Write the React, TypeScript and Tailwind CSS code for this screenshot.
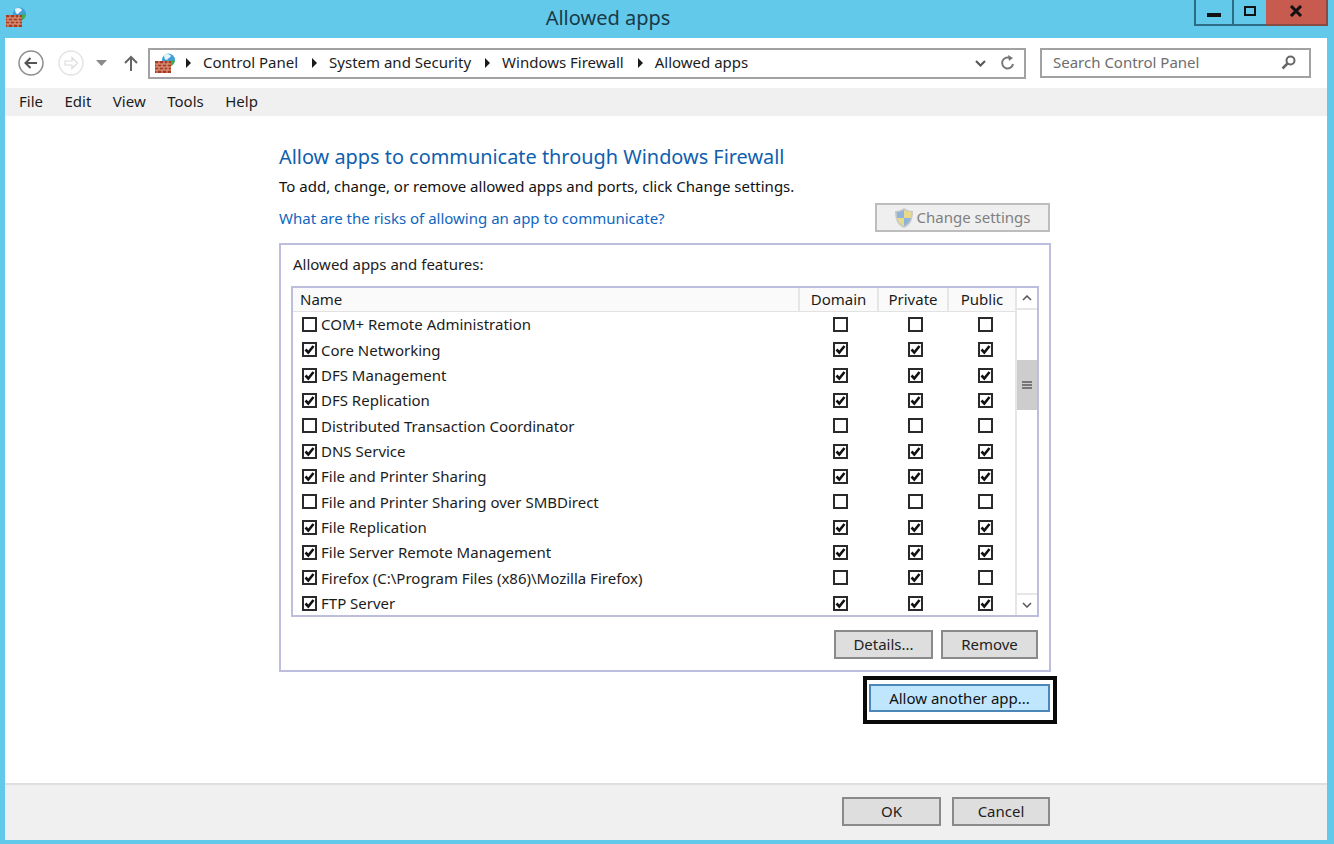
const rows: [string, boolean, boolean, boolean, boolean][] = [
  ['COM+ Remote Administration', false, false, false, false],
  ['Core Networking', true, true, true, true],
  ['DFS Management', true, true, true, true],
  ['DFS Replication', true, true, true, true],
  ['Distributed Transaction Coordinator', false, false, false, false],
  ['DNS Service', true, true, true, true],
  ['File and Printer Sharing', true, true, true, true],
  ['File and Printer Sharing over SMBDirect', false, false, false, false],
  ['File Replication', true, true, true, true],
  ['File Server Remote Management', true, true, true, true],
  ['Firefox (C:\\Program Files (x86)\\Mozilla Firefox)', true, false, true, false],
  ['FTP Server', true, true, true, true],
]

const FirewallIcon = () => (
  <svg width="22" height="22" viewBox="0 0 22 22" className="shrink-0">
    <circle cx="14.5" cy="8" r="6.5" fill="#3f9fd8" />
    <path d="M10 3c3-2 6-1 7 1-1 2-3 2-4 4-2 0-3-2-3-5z" fill="#e8f4fb" />
    <path d="M15 9c2-1 4-1 6 0-1 3-3 5-5 5-1-2-2-3-1-5z" fill="#3fae4a" />
    <rect x="1" y="9" width="16" height="12" fill="#a83a22" />
    <path d="M1 12h16M1 15h16M1 18h16M5 9v3M10 9v3M14 9v3M3 12v3M8 12v3M13 12v3M5 15v3M10 15v3M14 15v3M3 18v3M8 18v3M13 18v3" stroke="#e2a48c" strokeWidth="1" fill="none" />
  </svg>
)

const ShieldIcon = () => (
  <svg width="20" height="22" viewBox="0 0 20 22" className="shrink-0">
    <path d="M10 1c3 2 5 3 9 3 0 8-2 14-9 17C3 18 1 12 1 4c4 0 6-1 9-3z" fill="#c9c9c9" />
    <path d="M10 3v8H3c0-2-.2-4-.2-6C5.500 5 8 4.200 10 3z" fill="#8fb4dc" />
    <path d="M10 3c2 1.200 4.500 2 7.200 2 0 2 0 4-.2 6h-7z" fill="#e9d98c" />
    <path d="M3 11h7v8c-4-2-6-4.500-7-8z" fill="#e9d98c" />
    <path d="M10 11h7c-1 3.500-3 6-7 8z" fill="#8fb4dc" />
  </svg>
)

const Crumb = () => (
  <svg width="7" height="10" viewBox="0 0 7 10" className="shrink-0 block">
    <path d="M1 0l5 5-5 5z" fill="#1a1a1a" />
  </svg>
)

const Check = ({ on }: { on: boolean }) => (
  <span className="w-[15px] h-[15px] shrink-0 border-2 border-[#2a2a2a] bg-white flex items-center justify-center">
    {on && (
      <svg width="11" height="11" viewBox="0 0 11 11">
        <path d="M1.500 5.500L4.300 8.500 9.500 2" stroke="#111" strokeWidth="2.600" fill="none" />
      </svg>
    )}
  </span>
)

const Btn = ({ label, className }: { label: string; className: string }) => (
  <div className={`h-[29px] border-2 border-[#8a8a8a] bg-[#dedede] text-[#222] flex items-center justify-center ${className}`}>
    {label}
  </div>
)

const App = () => (
  <div
    className="w-screen h-screen overflow-hidden bg-[#62c9ea] flex flex-col text-[15px] text-[#1c1c1c]"
    style={{ fontFamily: '"Noto Sans", "Open Sans", sans-serif' }}
  >
    {/* title bar */}
    <div className="h-[38px] shrink-0 flex items-start">
      <div className="pl-[5px] pt-[6px] w-[30px]">
        <FirewallIcon />
      </div>
      <div className="flex-1 text-center text-[20px] pt-[3px] pr-[8px] text-[#1a3a48]">Allowed apps</div>
      <div className="flex h-[26px] mr-[6px]">
        <div className="w-[38px] border-2 border-t-0 border-r-0 border-[#2b6d84] flex items-center justify-center">
          <span className="block w-[14px] h-[4px] mt-[5px] bg-[#111]" />
        </div>
        <div className="w-[34px] border-2 border-t-0 border-r-0 border-[#2b6d84] flex items-center justify-center">
          <span className="block w-[12px] h-[10px] -mt-[2px] border-2 border-[#111]" />
        </div>
        <div className="w-[62px] bg-[#c75b50] border-b-2 border-r-2 border-[#8a4a44] flex items-center justify-center">
          <svg width="14" height="12" viewBox="0 0 14 12" className="-mt-[2px]">
            <path d="M2 1l10 10M12 1L2 11" stroke="#111" strokeWidth="3" fill="none" />
          </svg>
        </div>
      </div>
    </div>

    <div className="flex-1 ml-[5px] mr-[7px] mb-[4px] bg-white flex flex-col min-h-0">
      {/* nav */}
      <div className="h-[50px] shrink-0 flex items-center pl-[13px] pr-[16px]">
        <svg width="26" height="26" viewBox="0 0 26 26" className="shrink-0">
          <circle cx="13" cy="13" r="12" fill="none" stroke="#8c8c8c" strokeWidth="1.500" />
          <path d="M19 13H8M12.500 8L7.500 13l5 5" fill="none" stroke="#555" strokeWidth="2" />
        </svg>
        <svg width="26" height="26" viewBox="0 0 26 26" className="shrink-0 ml-[14px]">
          <circle cx="13" cy="13" r="12" fill="none" stroke="#e4e4e4" strokeWidth="1.500" />
          <path d="M7 11h7V7.500l5.500 5.500-5.500 5.500V15H7z" fill="none" stroke="#dcdcdc" strokeWidth="1.200" />
        </svg>
        <svg width="11" height="6" viewBox="0 0 11 6" className="shrink-0 ml-[12px]">
          <path d="M0 0h11L5.500 6z" fill="#8a8a8a" />
        </svg>
        <svg width="14" height="16" viewBox="0 0 14 16" className="shrink-0 ml-[17px]">
          <path d="M7 16V2M1 8l6-6 6 6" fill="none" stroke="#666" strokeWidth="2" />
        </svg>
        <div className="ml-[10px] w-[878px] h-[31px] border-2 border-[#a2a2a2] flex items-center pl-[4px] shrink-0">
          <FirewallIcon />
          <span className="ml-[9px]"><Crumb /></span>
          <span className="ml-[11px] -mt-[1px]">Control Panel</span>
          <span className="ml-[13px]"><Crumb /></span>
          <span className="ml-[11px] -mt-[1px]">System and Security</span>
          <span className="ml-[13px]"><Crumb /></span>
          <span className="ml-[11px] -mt-[1px]">Windows Firewall</span>
          <span className="ml-[13px]"><Crumb /></span>
          <span className="ml-[11px] -mt-[1px]">Allowed apps</span>
          <svg width="11" height="7" viewBox="0 0 11 7" className="ml-auto shrink-0">
            <path d="M1 1l4.500 4.500L10 1" fill="none" stroke="#555" strokeWidth="2" />
          </svg>
          <svg width="16" height="16" viewBox="0 0 16 16" className="ml-[14px] mr-[8px] shrink-0">
            <path d="M13 9a5.500 5.500 0 1 1-3-6" fill="none" stroke="#777" strokeWidth="2" />
            <path d="M8 0l5 3-4 3z" fill="#777" />
          </svg>
        </div>
        <div className="ml-[14px] w-[271px] h-[30px] border-2 border-[#a2a2a2] flex items-center pl-[11px] pr-[13px] pb-[2px] text-[#6d6d6d] shrink-0">
          Search Control Panel
          <svg width="15" height="15" viewBox="0 0 15 15" className="ml-auto">
            <circle cx="9.500" cy="5.500" r="4" fill="none" stroke="#666" strokeWidth="2" />
            <path d="M6.500 8.500L1.500 13.500" stroke="#666" strokeWidth="2.500" />
          </svg>
        </div>
      </div>

      {/* menu */}
      <div className="h-[28px] shrink-0 bg-[#f0f0f0] flex items-center pl-[14px] pb-[2px] gap-[21.5px]">
        <span>File</span>
        <span>Edit</span>
        <span>View</span>
        <span>Tools</span>
        <span>Help</span>
      </div>

      {/* content */}
      <div className="flex-1 pl-[274px] pt-[27px] min-h-0">
        <div className="w-[772px]">
          <div className="text-[19.9px] leading-[28px] text-[#0f5fae]">Allow apps to communicate through Windows Firewall</div>
          <div className="mt-[3px] leading-[24px] text-[#111]">To add, change, or remove allowed apps and ports, click Change settings.</div>
          <div className="mt-[4px] h-[32px] flex items-center justify-between">
            <span className="text-[#0f66c0] pt-[1px]">What are the risks of allowing an app to communicate?</span>
            <div className="w-[175px] h-[29px] mr-[1px] -mt-[1px] border-2 border-[#bdbdbd] bg-[#efefef] text-[#7f7f7f] flex items-center justify-center gap-[2px]">
              <ShieldIcon />
              Change settings
            </div>
          </div>

          <div className="mt-[9px] h-[429px] border-2 border-[#bdbdde] px-[10px] pt-[6px]">
            <div className="leading-[26px] pl-[2px]">Allowed apps and features:</div>
            <div className="mt-[9px] h-[331px] border-2 border-[#bdbdde] flex">
              <div className="flex-1 min-w-0">
                <div className="h-[24px] flex border-b border-[#e2e2e2] bg-[#fafafa]">
                  <div className="w-[507px] pl-[7px] leading-[23px] border-r-2 border-[#e6e6e6]">Name</div>
                  <div className="w-[79px] text-center leading-[23px] border-r-2 border-[#e6e6e6]">Domain</div>
                  <div className="w-[70px] text-center leading-[23px] border-r-2 border-[#e6e6e6]">Private</div>
                  <div className="flex-1 text-center leading-[23px]">Public</div>
                </div>
                {rows.map(([name, on, d, pr, pu]) => (
                  <div key={name} className="h-[25.33px] flex items-center">
                    <div className="w-[507px] pl-[9px] flex items-center gap-[4px] whitespace-nowrap">
                      <Check on={on} />
                      {name}
                    </div>
                    <div className="w-[79px] flex justify-center pl-[1px]"><Check on={d} /></div>
                    <div className="w-[70px] flex justify-center pl-[3px]"><Check on={pr} /></div>
                    <div className="flex-1 flex justify-center pl-[6px]"><Check on={pu} /></div>
                  </div>
                ))}
              </div>
              {/* scrollbar */}
              <div className="w-[22px] border-l-2 border-[#e6e6e6] flex flex-col bg-white">
                <div className="h-[22px] border-b-2 border-[#e6e6e6] flex items-center justify-center">
                  <svg width="10" height="6" viewBox="0 0 10 6"><path d="M1 5l4-4 4 4" fill="none" stroke="#555" strokeWidth="1.500" /></svg>
                </div>
                <div className="mt-[50px] h-[50px] bg-[#cdcdcd] flex flex-col items-center justify-center gap-[1px]">
                  <span className="block w-[10px] h-[2px] bg-[#777]" />
                  <span className="block w-[10px] h-[2px] bg-[#777]" />
                  <span className="block w-[10px] h-[2px] bg-[#777]" />
                </div>
                <div className="mt-auto h-[22px] border-t-2 border-[#e6e6e6] flex items-center justify-center">
                  <svg width="10" height="6" viewBox="0 0 10 6"><path d="M1 1l4 4 4-4" fill="none" stroke="#555" strokeWidth="1.500" /></svg>
                </div>
              </div>
            </div>
            <div className="mt-[13px] flex justify-end gap-[8px] pr-[1px]">
              <Btn label="Details..." className="w-[99px]" />
              <Btn label="Remove" className="w-[97px]" />
            </div>
          </div>

          <div className="mt-[4px] flex justify-end -mr-[6px]">
            <div className="w-[194px] h-[48px] border-4 border-[#0a0a0a] pl-[2px] pt-[4px]">
              <div className="w-[181px] h-[28px] border-2 border-[#4a86b8] bg-[#bfe6fd] text-[#111] flex items-center justify-center">
                Allow another app...
              </div>
            </div>
          </div>
        </div>
      </div>

      {/* footer */}
      <div className="h-[57px] shrink-0 bg-[#f0f0f0] border-t-2 border-[#dfdfdf] flex items-start justify-end pt-[12px] pr-[277px] gap-[11px]">
        <Btn label="OK" className="w-[99px]" />
        <Btn label="Cancel" className="w-[98px]" />
      </div>
    </div>
  </div>
)

export default App
